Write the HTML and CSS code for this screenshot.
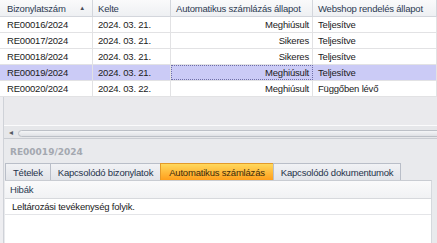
FILE: index.html
```html
<!DOCTYPE html>
<html>
<head>
  <title>Bizonylatok</title>
  <link rel="stylesheet" href="styles.css">
</head>
<body>
  <div class="grid">
    <div class="row head">
      <div class="cell">Bizonylatszám<span class="sort">▲</span></div>
      <div class="cell">Kelte</div>
      <div class="cell">Automatikus számlázás állapot</div>
      <div class="cell">Webshop rendelés állapot</div>
    </div>
    <div class="row">
      <div class="cell">RE00016/2024</div>
      <div class="cell">2024. 03. 21.</div>
      <div class="cell num">Meghiúsult</div>
      <div class="cell">Teljesítve</div>
    </div>
    <div class="row">
      <div class="cell">RE00017/2024</div>
      <div class="cell">2024. 03. 21.</div>
      <div class="cell num">Sikeres</div>
      <div class="cell">Teljesítve</div>
    </div>
    <div class="row">
      <div class="cell">RE00018/2024</div>
      <div class="cell">2024. 03. 21.</div>
      <div class="cell num">Sikeres</div>
      <div class="cell">Teljesítve</div>
    </div>
    <div class="row selected">
      <div class="cell">RE00019/2024</div>
      <div class="cell">2024. 03. 21.</div>
      <div class="cell num focus">Meghiúsult</div>
      <div class="cell">Teljesítve</div>
    </div>
    <div class="row">
      <div class="cell">RE00020/2024</div>
      <div class="cell">2024. 03. 22.</div>
      <div class="cell num">Meghiúsult</div>
      <div class="cell">Függőben lévő</div>
    </div>
  </div>

  <div class="lower">
    <div class="gridEmpty"></div>
    <div class="hscroll">
      <span class="arrow">◂</span>
      <div class="thumb"></div>
    </div>

    <div class="panel">
      <div class="panelTitle">RE00019/2024</div>
      <div class="tabs">
        <div class="tab">Tételek</div>
        <div class="tab">Kapcsolódó bizonylatok</div>
        <div class="tab active">Automatikus számlázás</div>
        <div class="tab">Kapcsolódó dokumentumok</div>
      </div>
      <div class="tabBody">
        <div class="errHead">Hibák</div>
        <div class="errRow">Leltározási tevékenység folyik.</div>
      </div>
    </div>
  </div>
</body>
</html>
```

FILE: styles.css
```css
* {
  box-sizing: border-box;
}
body {
  margin: 0;
  width: 437px;
  height: 243px;
  overflow: hidden;
  background: #eeeef1;
  font-family: "Liberation Sans", Arial, sans-serif;
  font-size: 9.5px;
  letter-spacing: -0.2px;
  color: #1b1b1b;
}
.grid {
  background: #fff;
}
.row {
  display: grid;
  grid-template-columns: 93px 78px 142px 1fr;
  height: 16px;
  border-bottom: 1px solid #e2e2e4;
}
.row.head {
  height: 17px;
  background: linear-gradient(#fafafb, #eef0f3);
  border-bottom: 1px solid #d3d6dc;
  color: #2c3a52;
}
.cell {
  display: flex;
  align-items: center;
  padding: 0 5px;
  border-right: 1px solid #e2e2e4;
  white-space: nowrap;
  overflow: hidden;
}
.head .cell {
  border-right-color: #d3d6dc;
}
.row .cell:first-child {
  padding-left: 7px;
}
.sort {
  margin-left: auto;
  margin-right: 2px;
  font-size: 6px;
  color: #4a4f58;
}
.num {
  justify-content: flex-end;
  padding-right: 3px;
}
.selected {
  background: #cbcbf6;
}
.focus {
  border: 1px dotted #6f6fa8;
}
.lower {
  margin-left: 3px;
  border-left: 1px solid #cfd2d8;
}
.gridEmpty {
  height: 29px;
  background: #eaeaed;
  border-bottom: 1px solid #fbfbfc;
}
.hscroll {
  display: flex;
  align-items: center;
  height: 13px;
  background: #e6e7ea;
  border-bottom: 1px solid #c9ccd2;
}
.arrow {
  width: 14px;
  padding-left: 5px;
  font-size: 8px;
  color: #555a63;
}
.thumb {
  flex-grow: 1;
  height: 7px;
  margin-top: 2px;
  margin-right: -10px;
  border: 1px solid #bcc0c7;
  border-radius: 4px;
  background: linear-gradient(#f4f5f7, #dfe1e5);
}
.panel {
  background: #e9eaed;
}
.panelTitle {
  height: 24px;
  padding: 8px 0 0 6px;
  font-family: "DejaVu Sans", sans-serif;
  font-weight: bold;
  font-size: 9px;
  letter-spacing: 0;
  color: #a4a8b0;
}
.tabs {
  display: flex;
  height: 17px;
  padding-left: 1px;
}
.tab {
  display: flex;
  align-items: center;
  padding: 0 7px;
  margin-right: -1px;
  border: 1px solid #b9bec8;
  border-bottom: none;
  background: linear-gradient(#f1f2f5, #e2e4e9);
  color: #25324a;
  white-space: nowrap;
}
.tab.active {
  padding: 0 8px;
  background: linear-gradient(#ffd85c, #ff9f1c);
  border-color: #e39a2a;
  color: #3b2a0a;
}
.tabBody {
  height: 63px;
  margin-left: 1px;
  margin-right: 5px;
  background: #fff;
  border-top: 1px solid #c9ccd2;
  border-right: 1px solid #d5d8dd;
}
.errHead {
  display: flex;
  align-items: center;
  height: 18px;
  padding-left: 5px;
  background: linear-gradient(#fafafb, #f1f2f4);
  border-bottom: 1px solid #d7d9dd;
  color: #2c3a52;
}
.errRow {
  display: flex;
  align-items: center;
  height: 16px;
  padding-left: 7px;
  border-bottom: 1px solid #e4e5e8;
}
```
